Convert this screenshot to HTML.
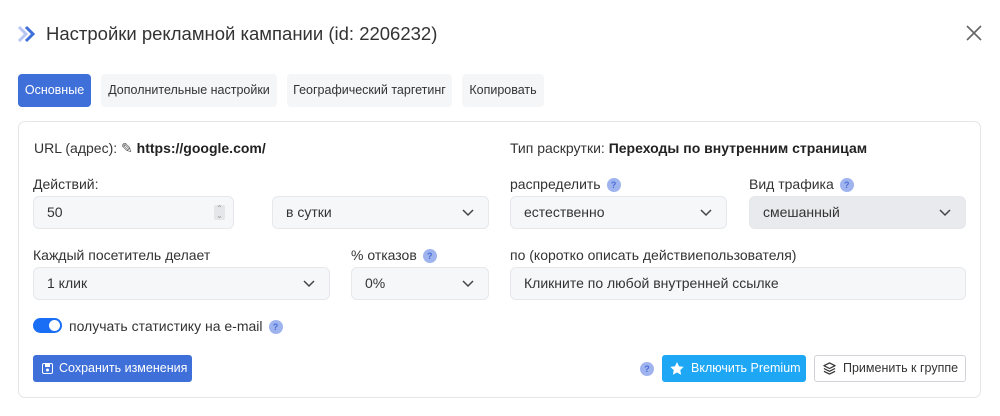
<!DOCTYPE html>
<html><head><meta charset="utf-8"><style>
*{box-sizing:border-box;margin:0;padding:0}
body{width:1000px;height:416px;background:#fff;font-family:"Liberation Sans",sans-serif;color:#333;position:relative;overflow:hidden}
.a{position:absolute}
.tab{position:absolute;top:74px;height:33px;background:#f5f6f7;border-radius:4px;font-size:12.5px;line-height:33px;text-align:center;color:#333}
.card{position:absolute;left:18px;top:121px;width:963px;height:277px;border:1px solid #e3e5e8;border-radius:7px}
.lbl{position:absolute;font-size:14px;color:#333}
.in{position:absolute;height:33px;background:#f6f7f8;border:1px solid #e6e8eb;border-radius:6px;font-size:14px;line-height:31px;padding-left:13px;color:#333}
.chev{position:absolute;right:14px;top:10px}
.q{display:inline-block;width:14px;height:14px;border-radius:50%;background:#9fb4ef;color:#4b6ed6;font-size:9px;line-height:14px;text-align:center;font-weight:bold;vertical-align:1px;margin-left:6px}
</style></head><body>
<svg class="a" style="left:17px;top:25px" width="20" height="18" viewBox="0 0 20 18"><path d="M2 2l7 7-7 7" stroke="#b7c6f2" stroke-width="3" fill="none"/><path d="M9 2l7 7-7 7" stroke="#3f6fd8" stroke-width="3" fill="none"/></svg>
<div class="a" style="left:46px;top:23px;font-size:18.5px;color:#333">Настройки рекламной кампании (id: 2206232)</div>
<svg class="a" style="left:966px;top:25px" width="16" height="16"><path d="M1 1l14 14M15 1L1 15" stroke="#666" stroke-width="1.6"/></svg>
<div class="tab" style="left:18px;width:73px;background:#3f6fd8;color:#fff">Основные</div>
<div class="tab" style="left:101px;width:176px">Дополнительные настройки</div>
<div class="tab" style="left:287px;width:165px">Географический таргетинг</div>
<div class="tab" style="left:462px;width:82px">Копировать</div>
<div class="card"></div>
<div class="lbl" style="left:34px;top:140px">URL (адрес): <span style="color:#555">✎</span> <b style="color:#222">https://google.com/</b></div>
<div class="lbl" style="left:510px;top:140px">Тип раскрутки: <b style="color:#222">Переходы по внутренним страницам</b></div>
<div class="lbl" style="left:33px;top:176px">Действий:</div>
<div class="lbl" style="left:510px;top:176px">распределить<span class="q">?</span></div>
<div class="lbl" style="left:749px;top:176px">Вид трафика<span class="q">?</span></div>
<div class="in" style="left:33px;top:196px;width:201px">50<span class="a" style="right:8px;top:8px;width:11px;height:15px;background:#e4e6ea;border-radius:2px;font-size:8px;line-height:7px;text-align:center;color:#999">⌃<br>⌄</span></div>
<div class="in" style="left:272px;top:196px;width:217px">в сутки<svg class="chev" width="12" height="10"><path d="M1 3l5 5 5-5" stroke="#444" stroke-width="1.5" fill="none"/></svg></div>
<div class="in" style="left:510px;top:196px;width:217px">естественно<svg class="chev" width="12" height="10"><path d="M1 3l5 5 5-5" stroke="#444" stroke-width="1.5" fill="none"/></svg></div>
<div class="in" style="left:749px;top:196px;width:217px;background:#e9eaed">смешанный<svg class="chev" width="12" height="10"><path d="M1 3l5 5 5-5" stroke="#444" stroke-width="1.5" fill="none"/></svg></div>
<div class="lbl" style="left:33px;top:247px">Каждый посетитель делает</div>
<div class="lbl" style="left:351px;top:247px">% отказов<span class="q">?</span></div>
<div class="lbl" style="left:510px;top:247px">по (коротко описать действиепользователя)</div>
<div class="in" style="left:33px;top:267px;width:297px">1 клик<svg class="chev" width="12" height="10"><path d="M1 3l5 5 5-5" stroke="#444" stroke-width="1.5" fill="none"/></svg></div>
<div class="in" style="left:351px;top:267px;width:138px">0%<svg class="chev" width="12" height="10"><path d="M1 3l5 5 5-5" stroke="#444" stroke-width="1.5" fill="none"/></svg></div>
<div class="in" style="left:510px;top:267px;width:456px">Кликните по любой внутренней ссылке</div>
<div class="a" style="left:33px;top:318px;width:29px;height:15px;border-radius:8px;background:#1a6ef5"><div class="a" style="right:2px;top:2px;width:11px;height:11px;border-radius:50%;background:#fff"></div></div>
<div class="lbl" style="left:69px;top:318px">получать статистику на e-mail<span class="q">?</span></div>
<div class="a" style="left:33px;top:355px;width:159px;height:27px;background:#3f6fd8;border-radius:3px;color:#fff;font-size:12.5px;line-height:27px;padding-left:26px">Сохранить изменения
<svg class="a" style="left:9px;top:8px" width="11" height="11"><rect x="0.5" y="0.5" width="10" height="10" rx="1.5" fill="none" stroke="#fff"/><rect x="3" y="1" width="5" height="3" fill="#fff"/><circle cx="5.5" cy="7" r="1.5" fill="#fff"/></svg></div>
<div class="a" style="left:640px;top:362px;width:14px;height:14px;border-radius:50%;background:#9fb4ef;color:#4b6ed6;font-size:9px;line-height:14px;text-align:center;font-weight:bold">?</div>
<div class="a" style="left:662px;top:355px;width:144px;height:27px;background:#1ea7f5;border-radius:3px;color:#fff;font-size:12.5px;line-height:27px;padding-left:29px">Включить Premium
<svg class="a" style="left:8px;top:7px" width="14" height="13" viewBox="0 0 24 23"><path d="M12 0l3.6 7.5 8.2 1.1-6 5.7 1.5 8.2L12 18.6 4.7 22.5l1.5-8.2-6-5.7 8.2-1.1z" fill="#fff"/></svg></div>
<div class="a" style="left:814px;top:355px;width:152px;height:27px;border:1px solid #d0d3d8;border-radius:3px;color:#333;font-size:12.5px;line-height:25px;padding-left:28px">Применить к группе
<svg class="a" style="left:8px;top:6px" width="13" height="13" viewBox="0 0 14 14"><path d="M7 1L1 4l6 3 6-3z M1 7l6 3 6-3 M1 10l6 3 6-3" fill="none" stroke="#333" stroke-width="1.3" stroke-linejoin="round"/></svg></div>
</body></html>
